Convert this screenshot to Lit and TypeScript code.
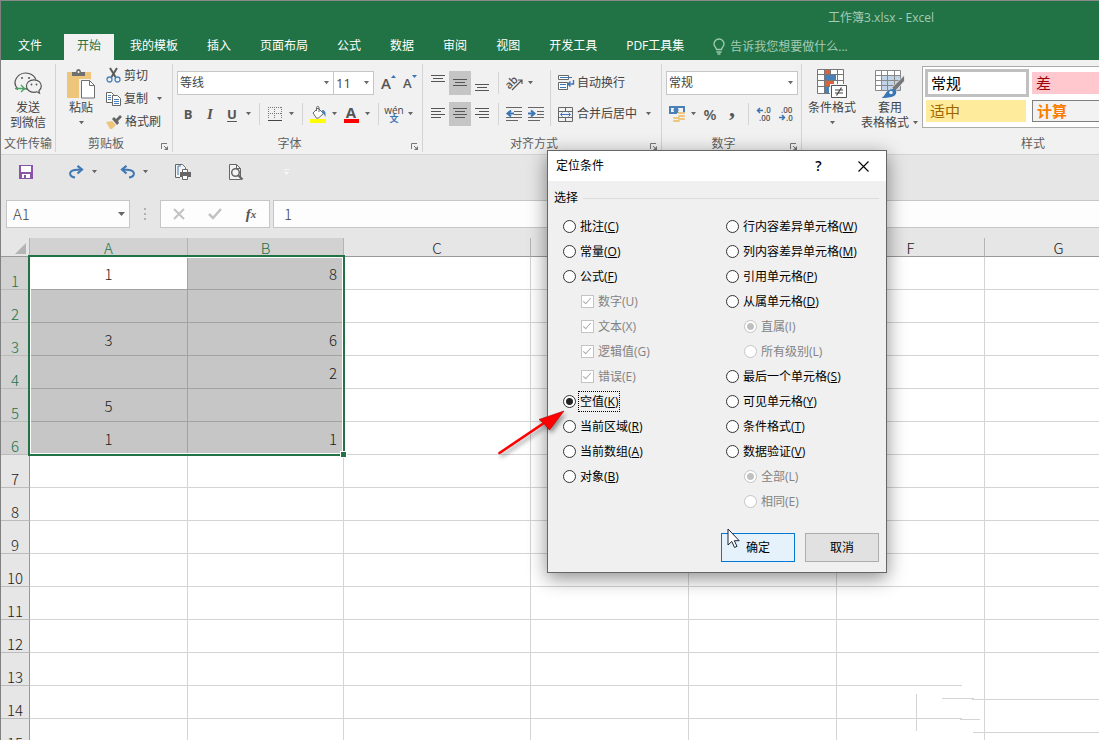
import { LitElement, html, svg, css, nothing } from "lit";
import { customElement, property } from "lit/decorators.js";
import { classMap } from "lit/directives/class-map.js";

const arrow = html`<svg class="arrow" width="7" height="4" viewBox="0 0 7 4"><path d="M1 0h5L3.500 3.200z" fill="#666" /></svg>`;

const icon = (w: number, h: number, body: unknown) =>
  html`<svg width=${w} height=${h} viewBox="0 0 ${w} ${h}" fill="none" aria-hidden="true">${body}</svg>`;

const lines = (rows: number[][]) =>
  icon(16, 16, svg`${rows.map(([x, y, w]) => svg`<rect x=${x} y=${y} width=${w} height="1" fill="#555"/>`)}`);

const icons = {
  wechat: icon(28, 26, svg`
    <path d="M3.500 17.500C.8 14.500.3 10.500 2.500 7 5 3 10 1.200 15 2.500c3.500 1 6 3.300 6.800 6M3.500 17.500l-.5 1.500M10 17.800h3" stroke="#555" stroke-width="1.200"/>
    <path d="M20 8.800c-4.500 0-7.600 2.800-7.600 6.200 0 3.500 3.200 6.300 7.500 6.300 1 0 2-.2 2.900-.5l2.700 1.400-.6-2.400c1.500-1.200 2.400-2.900 2.400-4.800 0-3.400-3-6.200-7.300-6.200z" stroke="#555" stroke-width="1.200"/>
    <circle cx="8" cy="7" r="1" fill="#555"/><circle cx="15" cy="7" r="1" fill="#555"/>
    <circle cx="17.500" cy="13.500" r=".9" fill="#555"/><circle cx="22.500" cy="13.500" r=".9" fill="#555"/>
    <path d="M1 17.500h9M7 14l3.500 3.500L7 21" stroke="#4aa564" stroke-width="1.400"/>`),
  paste: icon(30, 30, svg`
    <path d="M1 3h24v26H1z" fill="#edc67c"/><path d="M6 7V3h4c0-4 5-4 5 0h4v4z" fill="#6f6f6f"/><circle cx="12.500" cy="3" r="1" fill="#fff"/>
    <path d="M13 10h11l6 6v14H13z" fill="#f1f1f1"/>
    <path d="M15.500 11.500h8l5 5v12.500H15.500z" fill="#fff" stroke="#6f6f6f"/><path d="M23.500 11.500v5h5" stroke="#6f6f6f"/>`),
  cut: icon(15, 15, svg`
    <path d="M4 0l5.500 9M11 0L5.500 9" stroke="#5a5a5a" stroke-width="2"/>
    <circle cx="3.500" cy="11.500" r="2.500" stroke="#4a80b8" stroke-width="1.300"/><circle cx="11.500" cy="11.500" r="2.500" stroke="#4a80b8" stroke-width="1.300"/>`),
  copy: icon(15, 14, svg`
    <path d="M.5.500h5l2 2v8h-7z" fill="#fff" stroke="#666"/><path d="M6.500 3.500h5l3 3v7h-8z" fill="#fff" stroke="#666"/>
    <path d="M2 3.500h3M2 5.500h3M2 7.500h3M8 7.500h5M8 9.500h5M8 11.500h5" stroke="#4a80b8"/>`),
  brush: icon(16, 14, svg`
    <path d="M0 7l6-1 4 4-4 4H4z" fill="#edc67c"/><path d="M6 4l2-2 2 2 4-4 2 2-4 4 1 2-2 2z" fill="#666"/>`),
  border: icon(14, 14, svg`
    <path d="M.5 0v12M13.500 0v12M0 .500h14M6.500 0v12M0 6.500h14" stroke="#777" stroke-dasharray="1 1"/><path d="M0 13.500h14" stroke="#444"/>`),
  fill: icon(17, 17, svg`
    <path d="M3 7l5-5 5.500 5.500-5 4.500-2 .200z" fill="#fff" stroke="#666"/><path d="M6.500 5V1.500C6.500 0 9 0 9 1.500V6" stroke="#666"/>
    <path d="M12 4c3 0 4 2 3.500 7-1-2-1.500-3-3-3.500z" fill="#4a80b8"/><path d="M0 13h16v4H0z" fill="#ff0"/>`),
  orient: icon(17, 16, svg`
    <text x="0" y="11" transform="rotate(-45 6 9)" font-family="Open Sans" font-size="11" font-weight="600" fill="#555">ab</text>
    <path d="M6 15L15.500 5.500M12 5h4v4" stroke="#555" stroke-width="1.200"/>`),
  outdent: icon(16, 14, svg`
    <path d="M0 .500h16M8 4.500h8M8 7.500h8M0 10.500h16M0 13.500h12" stroke="#666"/><path d="M8 6.500H2M5 3.500l-3.500 3L5 9.500" stroke="#3a76b5" stroke-width="2"/>`),
  indent: icon(16, 14, svg`
    <path d="M0 .500h16M9 4.500h7M9 7.500h7M0 10.500h16M0 13.500h12" stroke="#666"/><path d="M0 6.500h6M3 3.500l3.500 3L3 9.500" stroke="#3a76b5" stroke-width="2"/>`),
  wrap: icon(16, 16, svg`
    <path d="M.5.500h10v4H.5zM.5 7.500h9v7H.5z" fill="#fff" stroke="#666"/><path d="M2 2.500h12M2 9.500h6M2 12.500h6" stroke="#3a76b5"/>
    <path d="M15.500 5v4h-5M12.500 6.500L10 9l2.500 2.500" stroke="#3a76b5" stroke-width="1.400"/>`),
  merge: icon(16, 15, svg`
    <path d="M.5.500h14v14H.5zM.5 4.500h14M.5 10.500h14M7.500.500v4M7.500 10.500v4" stroke="#666"/>
    <path d="M3 7.500h9M4.500 5.500l-2 2 2 2M10.500 5.500l2 2-2 2" stroke="#3a76b5"/>`),
  money: icon(17, 16, svg`
    <path d="M0 0h16v8H0z" fill="#4a80b8"/><path d="M2 2h12v4H2z" fill="#f1f1f1"/><circle cx="7" cy="4" r="2.500" fill="#4a80b8"/>
    <path d="M8 7h9v9H3v-4h5z" fill="#f1f1f1"/>
    <g fill="#edc67c"><rect x="9" y="6" width="7" height="2" rx="1"/><rect x="9" y="9" width="7" height="2" rx="1"/><rect x="9" y="12" width="7" height="2" rx="1"/><rect x="4" y="11" width="7" height="2" rx="1"/><rect x="4" y="14" width="7" height="2" rx="1"/></g>`),
  moreDec: icon(16, 14, svg`
    <path d="M7 3.500H2M4 1L1.500 3.500 4 6" stroke="#3a76b5" stroke-width="1.500"/>
    <g font-family="Open Sans" font-size="8" font-weight="600" fill="#555"><text x="8" y="6">.0</text><text x="3" y="14">.00</text></g>`),
  lessDec: icon(16, 14, svg`
    <path d="M1 10.500h5M4 8l2.500 2.500L4 13" stroke="#3a76b5" stroke-width="1.500"/>
    <g font-family="Open Sans" font-size="8" font-weight="600" fill="#555"><text x="3" y="6">.00</text><text x="8" y="14">.0</text></g>`),
  cond: icon(30, 30, svg`
    <path d="M.5.500h26v24H.5z" fill="#fff"/><path d="M8 1h6v4H8zM8 12h9v5H8z" fill="#d9623f"/><path d="M8 6h11v5H8zM8 18h4v6H8z" fill="#4a80b8"/>
    <path d="M.5.500h26v24H.5zM7.500 0v24M13.500 0v5M20.500 0v24M0 5.500h27M0 11.500h27M0 17.500h27" stroke="#777"/>
    <path d="M13 15h17v15H13z" fill="#f1f1f1"/><path d="M14.500 16.500h15v12h-15z" fill="#fff" stroke="#555"/><path d="M18 21h8M18 24h8M24.500 18.500l-5 8" stroke="#444" stroke-width="1.200"/>`),
  table: icon(30, 29, svg`
    <path d="M.5.500h25v20H.5z" fill="#fff"/><path d="M7 6h18v14H7z" fill="#c0d3e9"/>
    <path d="M.5.500h25v20H.5zM6.500 0v20M12.500 0v20M19.500 0v20M0 5.500h26M0 10.500h26M0 15.500h26" stroke="#888"/>
    <path d="M29.500 5v6l-9 10-4-3z" fill="#777" stroke="#f1f1f1" stroke-width=".8"/><path d="M19 19c3 1 3 5 0 7-3 1.500-8 2-12.500 2C11 26 10 19 19 19z" fill="#3a76b5"/><circle cx="16" cy="22.500" r="1.800" fill="#e8f0f8"/>`),
  bulb: icon(12, 16, svg`
    <path d="M3.500 10.500C3.500 8.500 1 7.500 1 5a5 5 0 0 1 10 0c0 2.500-2.500 3.500-2.500 5.500zM3.500 13h5M4.500 15h3" stroke="#9fcbb0" stroke-width="1.300"/>`),
  save: icon(14, 14, svg`<path d="M0 0h14v14H0z" fill="#8a55a8"/><path d="M2 1h10v6H2zM3 9h8v4H3z" fill="#fff"/><path d="M5 10h2v3H5z" fill="#8a55a8"/>`),
  redo: icon(15, 14, svg`<path d="M6 12.500C1 12 0 8.500 2 6.500c2-1.800 5-2 10-2" stroke="#3f78b3" stroke-width="2"/><path d="M8.500.800L13 4.500 8.500 8.500" stroke="#3f78b3" stroke-width="2.200"/>`),
  undo: icon(15, 14, svg`<path d="M9 12.500C14 12 15 8.500 13 6.500c-2-1.800-5-2-10-2" stroke="#3f78b3" stroke-width="2"/><path d="M6.500.800L2 4.500 6.500 8.500" stroke="#3f78b3" stroke-width="2.200"/>`),
  print: icon(17, 16, svg`
    <path d="M5 13.500H.5V.500h7l3 3V6" fill="#f4f4f4" stroke="#666"/><path d="M3 2v9M3 2h3" stroke="#3f78b3"/>
    <path d="M7.500 5.500h5v3h-5z" fill="#fff" stroke="#666"/><path d="M5 8h11v5H5z" fill="#666"/><path d="M7.500 11.500h5v4h-5z" fill="#fff" stroke="#666"/>`),
  preview: icon(15, 16, svg`
    <path d="M.5.500h7l4 4v11H.5z" fill="#f4f4f4" stroke="#666"/><path d="M7.500.500v4h4" stroke="#666"/><circle cx="6.500" cy="8.500" r="3.800" fill="#f4f4f4" stroke="#666" stroke-width="1.500"/><path d="M9 11l4.500 4.500" stroke="#666" stroke-width="2.200"/>`),
  launcher: icon(7, 7, svg`<path d="M.5 6V.500H6" stroke="#777"/><path d="M3 3l3 3" stroke="#777"/><path d="M7 3v4H3z" fill="#777"/>`),
};

@customElement("ribbon-group")
class RibbonGroup extends LitElement {
  @property() label = "";
  @property({ type: Boolean }) launcher = false;
  static styles = css`
    :host { display: flex; flex: none; flex-direction: column; box-sizing: border-box; height: 88px; border-right: 1px solid #d4d4d4; }
    .body { flex: 1; display: flex; align-items: flex-start; }
    .foot { display: flex; height: 16px; align-items: center; color: #5f5f5f; }
    .name { flex: 1; text-align: center; line-height: 16px; white-space: nowrap; }
    .launch { all: unset; display: flex; align-items: flex-start; justify-content: center; width: 16px; height: 16px; padding-top: 7px; box-sizing: border-box; }
  `;
  render() {
    return html`<div class="body"><slot></slot></div>
      <div class="foot"><span class="name">${this.label}</span>
      ${this.launcher ? html`<button class="launch" aria-label="${this.label}设置">${icons.launcher}</button>` : nothing}</div>`;
  }
}

interface Option { text: string; key: string; kind?: "check" | "sub"; on?: boolean; focus?: boolean; set?: string }
const leftOptions: Option[] = [
  { text: "批注", key: "C" }, { text: "常量", key: "O" }, { text: "公式", key: "F" },
  { text: "数字", key: "U", kind: "check" }, { text: "文本", key: "X", kind: "check" },
  { text: "逻辑值", key: "G", kind: "check" }, { text: "错误", key: "E", kind: "check" },
  { text: "空值", key: "K", on: true, focus: true }, { text: "当前区域", key: "R" },
  { text: "当前数组", key: "A" }, { text: "对象", key: "B" },
];
const rightOptions: Option[] = [
  { text: "行内容差异单元格", key: "W" }, { text: "列内容差异单元格", key: "M" },
  { text: "引用单元格", key: "P" }, { text: "从属单元格", key: "D" },
  { text: "直属", key: "I", kind: "sub", on: true, set: "level" }, { text: "所有级别", key: "L", kind: "sub", set: "level" },
  { text: "最后一个单元格", key: "S" }, { text: "可见单元格", key: "Y" },
  { text: "条件格式", key: "T" }, { text: "数据验证", key: "V" },
  { text: "全部", key: "L", kind: "sub", on: true, set: "match" }, { text: "相同", key: "E", kind: "sub", set: "match" },
];

@customElement("goto-dialog")
class GotoDialog extends LitElement {
  static styles = css`
    :host { display: block; box-sizing: border-box; width: 340px; border: 1px solid #666; background: #f0f0f0; color: #000; box-shadow: 0 5px 18px rgba(0, 0, 0, 0.45); }
    .bar { display: flex; align-items: center; height: 30px; padding-left: 8px; background: #fff; }
    h2 { flex: 1; margin: 0; font-size: 12px; font-weight: 400; line-height: 16px; }
    .bar button { all: unset; display: flex; justify-content: center; align-items: center; width: 45px; height: 30px; font-size: 14px; font-weight: 600; }
    .body { padding: 9px 7px 10px 6px; }
    .legend { display: flex; align-items: center; gap: 5px; height: 16px; margin-bottom: 8px; }
    .legend::after { content: ""; flex: 1; border-top: 1px solid #dcdcdc; }
    .cols { display: grid; grid-template-columns: 163px 1fr; padding-left: 9px; }
    label { display: flex; align-items: center; gap: 2px; height: 25px; white-space: nowrap; }
    label.sub { padding-left: 18px; color: #838383; }
    label span { padding: 1px; border: 1px dotted transparent; line-height: 17px; }
    label span.focus { border-color: #000; }
    input { appearance: none; position: relative; flex: none; box-sizing: border-box; width: 13px; height: 13px; margin: 0; border: 1px solid #333; background: #fff; }
    input[type="radio"] { border-radius: 50%; }
    input[type="radio"]:checked { background: radial-gradient(circle, #222 0 3px, #fff 4px); }
    input:disabled { border-color: #c4c4c4; }
    input[type="radio"]:disabled:checked { background: radial-gradient(circle, #c0c0c0 0 3px, #fff 4px); }
    input[type="checkbox"]:checked::after { content: ""; position: absolute; left: 3px; top: 0; width: 3px; height: 7px; border: solid #a8a8a8; border-width: 0 1px 1px 0; transform: rotate(42deg); }
    .buttons { display: flex; justify-content: flex-end; gap: 10px; margin-top: 19px; }
    .buttons button { box-sizing: border-box; width: 74px; height: 29px; padding: 0; border: 1px solid #adadad; background: #e1e1e1; color: #000; font: inherit; }
    .buttons .ok { border-color: #0078d7; background: #e5f1fb; }
  `;
  private option(o: Option) {
    const text = o.kind ? html`(${o.key})` : html`(<u>${o.key}</u>)`;
    return html`<label class=${classMap({ sub: !!o.kind })}>
      ${o.kind === "check"
        ? html`<input type="checkbox" checked disabled />`
        : html`<input type="radio" name=${o.set ?? "target"} ?checked=${!!o.on} ?disabled=${!!o.kind} />`}
      <span class=${classMap({ focus: !!o.focus })}>${o.text}${text}</span></label>`;
  }
  render() {
    return html`
      <div class="bar"><h2>定位条件</h2><button>?</button>
        <button aria-label="关闭">${icon(11, 11, svg`<path d="M.5.500l10 10M10.500.500l-10 10" stroke="#000" stroke-width="1.100"/>`)}</button></div>
      <div class="body">
        <div class="legend">选择</div>
        <div class="cols">
          <div>${leftOptions.map((o) => this.option(o))}</div>
          <div>${rightOptions.map((o) => this.option(o))}</div>
        </div>
        <div class="buttons"><button class="ok">确定</button><button>取消</button></div>
      </div>`;
  }
}

const columns = ["A", "B", "C", "D", "E", "F", "G"];
const cells: Record<string, string> = { A1: "1", B1: "8", A3: "3", B3: "6", B4: "2", A5: "5", A6: "1", B6: "1" };

@customElement("sheet-grid")
class SheetGrid extends LitElement {
  static styles = css`
    :host { display: block; position: relative; overflow: hidden; background: #fff; font-size: 15px; color: #1a1a1a; font-family: "Noto Sans CJK SC", sans-serif; font-weight: 300; }
    table { width: 100%; min-width: 1132px; table-layout: fixed; border-collapse: separate; border-spacing: 0; }
    .rowcol { width: 29px; } .ca { width: 158px; } .cb { width: 156px; } .cc { width: 187px; } .cd { width: 158px; } .ce, .cf { width: 148px; }
    th, td { box-sizing: border-box; padding: 0; font-weight: 300; }
    thead th { height: 19px; padding-top: 2px; line-height: 16px; background: #e6e6e6; border-bottom: 1px solid #999; border-right: 1px solid #b4b4b4; }
    thead .corner svg { display: block; margin: 0 3px 0 auto; }
    thead .picked, tbody th.picked { background: #d2d2d2; color: #217346; }
    tbody th { height: 33px; line-height: 16px; vertical-align: bottom; background: #e6e6e6; border-right: 1px solid #999; border-bottom: 1px solid #bcbcbc; }
    td { height: 33px; padding-top: 2px; line-height: 20px; border-right: 1px solid #d4d4d4; border-bottom: 1px solid #d4d4d4; text-align: center; }
    td.b { text-align: right; padding-right: 6px; }
    td.picked { background: #c6c6c6; border-color: #a2a2a2; }
    td.active { background: #fff; }
    .range { position: absolute; left: 27px; top: 17px; width: 317px; height: 201px; box-sizing: border-box; border: 2px solid #217346; box-shadow: inset 0 0 0 1px #fff; }
    .handle { position: absolute; right: -4px; bottom: -4px; width: 5px; height: 5px; background: #217346; border: 1px solid #fff; }
    .patch { position: absolute; left: 911px; right: 0; top: 444px; height: 70px; }
    .patch svg { display: block; width: 100%; height: 70px; }
  `;
  render() {
    const rows = Array.from({ length: 15 }, (_, i) => i + 1);
    return html`
      <table>
        <colgroup><col class="rowcol" /><col class="ca" /><col class="cb" /><col class="cc" /><col class="cd" /><col class="ce" /><col class="cf" /><col /></colgroup>
        <thead><tr><th class="corner">${icon(11, 11, svg`<path d="M11 0v11H0z" fill="#b4b4b4"/>`)}</th>
          ${columns.map((c, i) => html`<th class=${classMap({ picked: i < 2 })}>${c}</th>`)}</tr></thead>
        <tbody>${rows.map((r) => html`<tr><th class=${classMap({ picked: r <= 6 })}>${r}</th>
          ${columns.map((c, i) => html`<td class=${classMap({ b: c === "B", picked: i < 2 && r <= 6, active: c + r === "A1" })}>${cells[c + r] ?? ""}</td>`)}</tr>`)}</tbody>
      </table>
      <div class="range"><div class="handle"></div></div>
      <div class="patch"><svg fill="none">
        <rect x="50" y="1" width="100%" height="69" fill="#fff"/>
        <path d="M4.500 12v37M30 16.500h32M48 37.500h20M72.500 0v70" stroke="#d4d4d4"/>
        <line x1="60" y1="17.500" x2="100%" y2="17.500" stroke="#d4d4d4"/><line x1="61" y1="50.500" x2="100%" y2="50.500" stroke="#d4d4d4"/>
      </svg></div>`;
  }
}

@customElement("app-root")
class AppRoot extends LitElement {
  static styles = css`
    :host { display: flex; flex-direction: column; position: relative; box-sizing: border-box; height: 100vh; overflow: hidden; border-top: 1px solid #8a8a8a; border-left: 1px solid #808080; background: #e6e6e6; color: #444; font: 12px/16px "Open Sans", "Noto Sans CJK SC", sans-serif; }
    svg { display: block; flex: none; overflow: visible; }
    button, select, input { font: inherit; color: inherit; }
    button { display: flex; align-items: center; justify-content: center; padding: 0; border: 0; background: none; white-space: nowrap; }
    header { flex: none; background: #217346; }
    .title { height: 33px; line-height: 33px; padding-right: 165px; text-align: right; color: #a5cbb4; }
    .tabs { display: flex; gap: 3px; height: 26px; padding-left: 4px; }
    .tabs button { height: 26px; padding: 0 13px 2px; color: #fff; }
    .tabs .file { margin-right: 6px; }
    .tabs .on { background: #f1f1f1; color: #217346; }
    .tell { display: flex; align-items: center; flex: 1; gap: 5px; padding-left: 13px; }
    .tell input { flex: 1; min-width: 0; padding: 0; border: 0; background: none; }
    .tell input::placeholder { color: #a5cbb4; }
    .ribbon { display: flex; flex: none; height: 95px; box-sizing: border-box; padding-top: 4px; overflow: hidden; background: #f1f1f1; border-bottom: 1px solid #d4d4d4; }
    .g1 { width: 55px; } .g2 { width: 117px; } .g3 { width: 250px; } .g4 { width: 239px; } .g5 { width: 140px; }
    .g6 { flex: 1 0 462px; border-right: 0; }
    .big { flex-direction: column; justify-content: flex-start; line-height: 15px; height: 68px; padding-top: 4px; }
    .big .pic { display: flex; align-items: center; height: 32px; }
    .big .last { display: flex; align-items: center; gap: 3px; height: 15px; }
    .send { width: 54px; }
    .paste { width: 50px; }
    .condf { width: 56px; margin-left: 2px; } .tablef { width: 60px; }
    .stack { display: flex; flex-direction: column; align-items: flex-start; }
    .stack button { gap: 3px; height: 23px; }
    .stack .dd { margin-left: 6px; }
    .cell { display: flex; align-items: center; }
    .rows { display: flex; flex-direction: column; gap: 7px; padding: 7px 0 0 4px; }
    .row { display: flex; align-items: center; height: 24px; }
    .ib { width: 22px; height: 24px; }
    .ib.on { background: #c5c5c5; }
    .dd { width: 11px; height: 24px; }
    .sep { width: 10px; height: 22px; flex: none; background: linear-gradient(#d4d4d4, #d4d4d4) center / 1px 100% no-repeat; }
    .combo { display: flex; align-items: center; box-sizing: border-box; height: 24px; border: 1px solid #c6c6c6; background: #fff; padding-right: 3px; }
    .combo select, .combo input { appearance: none; flex: 1; min-width: 0; height: 20px; padding: 0 0 0 2px; border: 0; background: none; outline: 0; }
    .face { width: 157px; } .size { width: 41px; margin-left: -1px; } .fmt { width: 132px; }
    .size select { font-size: 13px; }
    .grow { display: flex; align-items: flex-start; justify-content: flex-start; width: 22px; font-size: 15px; font-weight: 600; color: #555; }
    .grow.first { margin-left: 7px; }
    .shrink { font-size: 13px; }
    .glyph { font-size: 13px; font-weight: 700; color: #555; }
    .italic { font-style: italic; font-family: "Liberation Serif", serif; font-size: 15px; }
    .under { text-decoration: underline; text-underline-offset: 2px; }
    .red { flex-direction: column; justify-content: center; line-height: 12px; font-weight: 700; font-size: 15px; color: #555; }
    .red::after { content: ""; width: 15px; height: 4px; margin-top: 1px; background: #f00; }
    .wen { flex-direction: column; font-size: 10px; line-height: 8px; }
    .wen b { color: #3a76b5; font-size: 9px; line-height: 9px; }
    .pct { font-size: 15px; font-weight: 600; color: #555; }
    .comma { align-items: flex-start; font: 700 24px/12px "Liberation Serif", serif; color: #555; }
    .texts { display: flex; flex-direction: column; gap: 7px; margin-top: 6px; padding: 1px 0 0 7px; height: 56px; box-sizing: border-box; border-left: 1px solid #d4d4d4; }
    .texts button { gap: 3px; height: 24px; }
    .texts .dd { margin-left: 6px; }
    .aligns { padding-right: 3px; }
    .gallery { display: grid; grid-template-columns: 104px 104px 104px; grid-template-rows: 28px 22px; column-gap: 3px; row-gap: 3px; box-sizing: border-box; width: 330px; height: 62px; margin: 2px 0 0 2px; padding: 2px; border: 1px solid #ababab; background: #fff; font-size: 15px; }
    .gallery button { justify-content: flex-start; padding-left: 4px; }
    .gallery .normal { border: 3px solid #c0c0c0; color: #000; padding-left: 3px; }
    .bad { margin: 3px 0; background: #ffc7ce; color: #9c0006; }
    .mid { margin: 0 3px 0 1px; background: #ffeb9c; color: #9c6500; }
    .calc { background: #f2f2f2; border: 1px solid #7f7f7f; color: #fa7d00; font-weight: 700; }
    .quick { display: flex; align-items: center; flex: none; height: 34px; padding-left: 15px; }
    .quick .q { width: 20px; height: 22px; }
    .quick .after { margin-left: 30px; }
    .quick .dd { margin-left: 3px; }
    .quick .next { margin-left: 17px; }
    .quick .far { margin-left: 22px; }
    .quick .end { margin-left: 33px; }
    .formula { display: flex; flex: none; height: 28px; margin: 11px 0 10px 5px; font: 15px/20px "Noto Sans CJK SC", sans-serif; font-weight: 300; }
    .formula .combo { height: 28px; background: #fdfdfd; }
    .namebox { width: 124px; }
    .formula .combo input { padding-left: 6px; }
    .dots { display: flex; align-items: center; justify-content: center; width: 30px; }
    .fx { display: flex; box-sizing: border-box; width: 110px; margin-right: 3px; border: 1px solid #c6c6c6; background: #fdfdfd; }
    .fx button { flex: 1; }
    .fx .fn { font: italic 700 15px "Liberation Serif", serif; color: #555; }
    .fn small { font-size: 11px; }
    .formula .entry { flex: 1; border-right: 0; }
    .formula .entry input { padding-left: 10px; }
    sheet-grid { flex: 1; min-height: 0; }
    goto-dialog { position: absolute; left: 546px; top: 149px; }
    .pointer { position: absolute; left: 490px; top: 400px; filter: drop-shadow(2px 3px 2px rgba(0, 0, 0, 0.4)); }
    .mouse { position: absolute; left: 726px; top: 527px; }
  `;
  render() {
    const tabs = ["文件", "开始", "我的模板", "插入", "页面布局", "公式", "数据", "审阅", "视图", "开发工具", "PDF工具集"];
    const dd = html`<button class="dd" aria-label="更多">${arrow}</button>`;
    const ib = (name: string, pic: unknown, on = false) => html`<button class=${classMap({ ib: true, on })} aria-label=${name}>${pic}</button>`;
    const sep = html`<span class="sep"></span>`;
    return html`
      <header>
        <div class="title">工作簿3.xlsx - Excel</div>
        <nav class="tabs">
          ${tabs.map((t, i) => html`<button class=${classMap({ file: i === 0, on: i === 1 })}>${t}</button>`)}
          <label class="tell">${icons.bulb}<input placeholder="告诉我您想要做什么..." /></label>
        </nav>
      </header>
      <div class="ribbon">
        <ribbon-group class="g1" label="文件传输">
          <button class="big send"><span class="pic">${icons.wechat}</span><span>发送</span><span>到微信</span></button>
        </ribbon-group>
        <ribbon-group class="g2" label="剪贴板" launcher>
          <button class="big paste"><span class="pic">${icons.paste}</span><span>粘贴</span><span class="last">${arrow}</span></button>
          <div class="stack">
            <button>${icons.cut}<span>剪切</span></button>
            <div class="cell"><button>${icons.copy}<span>复制</span></button>${dd}</div>
            <button>${icons.brush}<span>格式刷</span></button>
          </div>
        </ribbon-group>
        <ribbon-group class="g3" label="字体" launcher>
          <div class="rows">
            <div class="row">
              <label class="combo face"><select aria-label="字体"><option>等线</option></select>${arrow}</label>
              <label class="combo size"><select aria-label="字号"><option>11</option></select>${arrow}</label>
              <button class="grow first">A${icon(5, 3, svg`<path d="M2.500 0L5 3H0z" fill="#3a76b5"/>`)}</button>
              <button class="grow shrink">A${icon(5, 3, svg`<path d="M0 0h5L2.500 3z" fill="#3a76b5"/>`)}</button>
            </div>
            <div class="row">
              <button class="ib glyph">B</button><button class="ib glyph italic">I</button><button class="ib glyph under">U</button>${dd}
              ${sep}${ib("边框", icons.border)}${dd}${sep}${ib("填充颜色", icons.fill)}${dd}
              <button class="ib red">A</button>${dd}${sep}<button class="ib wen">wén<b>文</b></button>${dd}
            </div>
          </div>
        </ribbon-group>
        <ribbon-group class="g4" label="对齐方式" launcher>
          <div class="rows aligns">
            <div class="row">
              ${ib("顶端对齐", lines([[1, 0, 14], [3, 3, 10], [1, 6, 14]]))}
              ${ib("垂直居中", lines([[1, 4, 14], [3, 7, 10], [1, 10, 14]]), true)}
              ${ib("底端对齐", lines([[1, 9, 14], [3, 12, 10], [1, 15, 14]]))}
              ${sep}${ib("方向", icons.orient)}${dd}
            </div>
            <div class="row">
              ${ib("左对齐", lines([[1, 2, 14], [1, 5, 10], [1, 8, 14], [1, 11, 10]]))}
              ${ib("居中", lines([[1, 2, 14], [3, 5, 10], [1, 8, 14], [3, 11, 10]]), true)}
              ${ib("右对齐", lines([[1, 2, 14], [5, 5, 10], [1, 8, 14], [5, 11, 10]]))}
              ${sep}${ib("减少缩进", icons.outdent)}${ib("增加缩进", icons.indent)}
            </div>
          </div>
          <div class="texts">
            <div class="cell"><button>${icons.wrap}<span>自动换行</span></button></div>
            <div class="cell"><button>${icons.merge}<span>合并后居中</span></button>${dd}</div>
          </div>
        </ribbon-group>
        <ribbon-group class="g5" label="数字" launcher>
          <div class="rows">
            <label class="combo fmt"><select aria-label="数字格式"><option>常规</option></select>${arrow}</label>
            <div class="row">
              ${ib("会计数字格式", icons.money)}${dd}<button class="ib pct">%</button><button class="ib comma">,</button>
              ${sep}${ib("增加小数位数", icons.moreDec)}${ib("减少小数位数", icons.lessDec)}
            </div>
          </div>
        </ribbon-group>
        <ribbon-group class="g6" label="样式">
          <button class="big condf"><span class="pic">${icons.cond}</span><span>条件格式</span><span class="last">${arrow}</span></button>
          <button class="big tablef"><span class="pic">${icons.table}</span><span>套用</span><span class="last">表格格式${arrow}</span></button>
          <div class="gallery">
            <button class="normal">常规</button><button class="bad">差</button><span></span>
            <button class="mid">适中</button><button class="calc">计算</button>
          </div>
        </ribbon-group>
      </div>
      <div class="quick">
        <button class="q" aria-label="保存">${icons.save}</button>
        <button class="q after" aria-label="恢复">${icons.redo}</button>${dd}
        <button class="q next" aria-label="撤消">${icons.undo}</button>${dd}
        <button class="q far" aria-label="快速打印">${icons.print}</button>
        <button class="q end" aria-label="打印预览">${icons.preview}</button>
        <button class="q after" aria-label="自定义">${icon(7, 7, svg`<path d="M1 .500h5" stroke="#f8f8f8"/><path d="M1 3h5L3.500 6z" fill="#f8f8f8"/>`)}</button>
      </div>
      <div class="formula">
        <label class="combo namebox"><input aria-label="名称框" value="A1" />${icon(9, 5, svg`<path d="M1 0h7L4.500 4z" fill="#666"/>`)}</label>
        <span class="dots">${icon(2, 12, svg`<path d="M0 0h2v2H0zM0 5h2v2H0zM0 10h2v2H0z" fill="#b0b0b0"/>`)}</span>
        <div class="fx">
          <button aria-label="取消">${icon(12, 12, svg`<path d="M1 1l10 10M11 1L1 11" stroke="#c2c2c2" stroke-width="2"/>`)}</button>
          <button aria-label="输入">${icon(14, 12, svg`<path d="M1 6l4 4 8-9" stroke="#c2c2c2" stroke-width="2.500"/>`)}</button>
          <button class="fn">f<small>x</small></button>
        </div>
        <label class="combo entry"><input aria-label="编辑栏" value="1" /></label>
      </div>
      <sheet-grid></sheet-grid>
      <goto-dialog></goto-dialog>
      <svg class="pointer" width="80" height="60" viewBox="0 0 80 60">
        <path d="M8.500 52L53 22" stroke="#f00" stroke-width="2.600" stroke-linecap="round"/><path d="M73 10L48 18.500l4.500 3.500 6 7z" fill="#f00" stroke="#a00" stroke-width=".6"/>
      </svg>
      <svg class="mouse" width="13" height="21" viewBox="0 0 13 21">
        <path d="M1 1v16l3.800-3.500 2.700 6 2.500-1.200-2.700-5.600h4.900z" fill="#fff" stroke="#1a2238"/>
      </svg>`;
  }
}
